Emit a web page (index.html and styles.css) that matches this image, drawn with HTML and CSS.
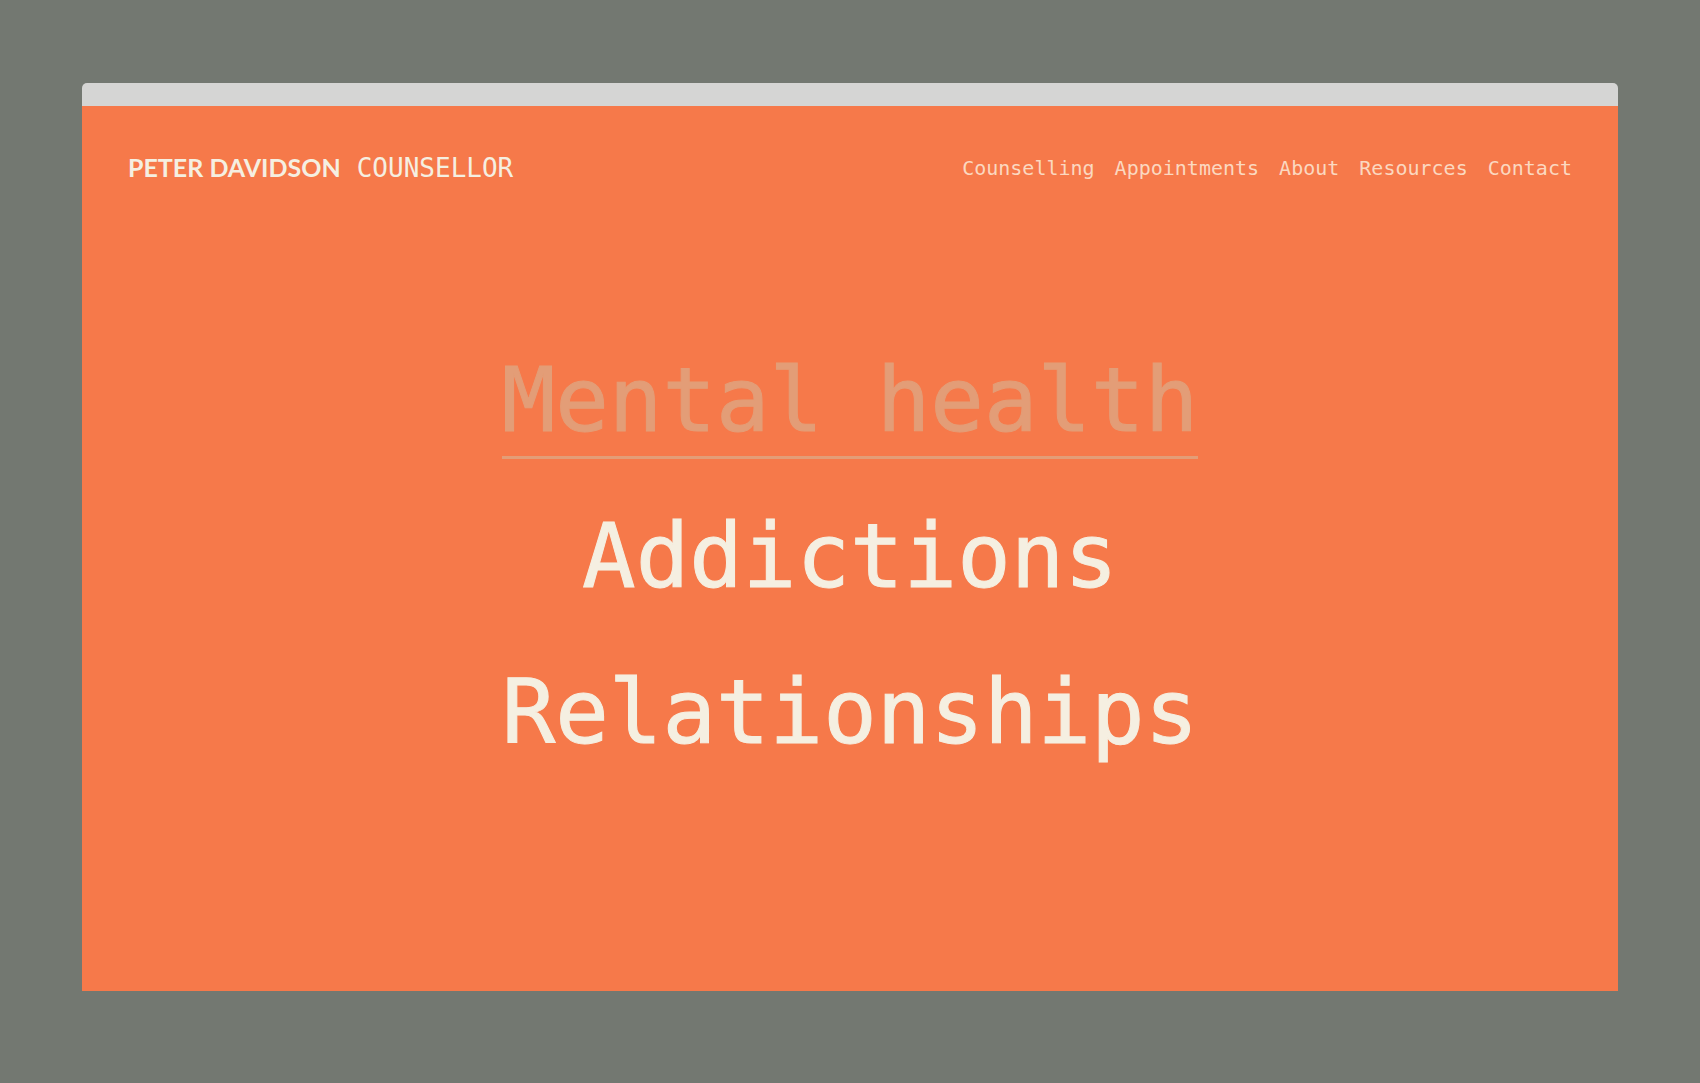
FILE: index.html
```html
<!DOCTYPE html>
<html lang="en">
<head>
    <meta charset="UTF-8">
    <meta name="viewport" content="width=device-width, initial-scale=1.0">
    <title>Peter Davidson Counsellor</title>
    <link rel="stylesheet" href="styles.css">
</head>
<body>
    <div class="window">
        <div class="window-bar"></div>

        <div class="page">
            <header class="site-header">
                <a href="#" class="logo">
                    <span class="logo-name">PETER DAVIDSON</span>
                    <span class="logo-role">COUNSELLOR</span>
                </a>
                <nav class="site-nav">
                    <a href="#counselling">Counselling</a>
                    <a href="#appointments">Appointments</a>
                    <a href="#about">About</a>
                    <a href="#resources">Resources</a>
                    <a href="#contact">Contact</a>
                </nav>
            </header>

            <!-- Topics -->
            <main class="topics">
                <a href="#mental-health" class="topic active">Mental health</a>
                <a href="#addictions" class="topic">Addictions</a>
                <a href="#relationships" class="topic">Relationships</a>
            </main>
        </div>
    </div>
</body>
</html>
```
FILE: styles.css
```css
* {
    margin: 0;
    padding: 0;
    box-sizing: border-box;
}

body {
    font-family: 'DejaVu Sans Mono', monospace;
    background: #737871;
    color: #f5efe1;
    min-height: 100vh;
    padding: 83px 82px 92px;
    display: flex;
}

a {
    color: inherit;
    text-decoration: none;
}

.window {
    flex: 1;
    display: flex;
    flex-direction: column;
    border-radius: 5px 5px 0 0;
    overflow: hidden;
}

.window-bar {
    height: 23px;
    background: #d5d5d4;
}

.page {
    flex: 1;
    display: flex;
    flex-direction: column;
    background: #f6794a;
}

.site-header {
    display: flex;
    flex-wrap: wrap;
    align-items: center;
    justify-content: space-between;
    gap: 20px;
    padding: 41px 46px;
}

.logo {
    display: flex;
    align-items: baseline;
    gap: 16px;
    line-height: 40px;
}

.logo-name {
    font-family: Lato, sans-serif;
    font-size: 25px;
    font-weight: 700;
}

.logo-role {
    font-size: 26px;
}

.site-nav {
    display: flex;
    flex-wrap: wrap;
    gap: 20px;
    font-size: 20px;
    line-height: 40px;
    color: #fbd8c0;
}

.topics {
    flex: 1;
    display: flex;
    flex-direction: column;
    align-items: center;
    justify-content: center;
    gap: 45px;
    padding-bottom: 102px;
}

.topic {
    font-size: 89px;
    line-height: 104px;
    padding-bottom: 4px;
    border-bottom: 3px solid transparent;
    -webkit-text-stroke: 1px;
}

.topic:hover,
.topic.active {
    color: #e39d77;
    border-color: #e39d77;
}
```
